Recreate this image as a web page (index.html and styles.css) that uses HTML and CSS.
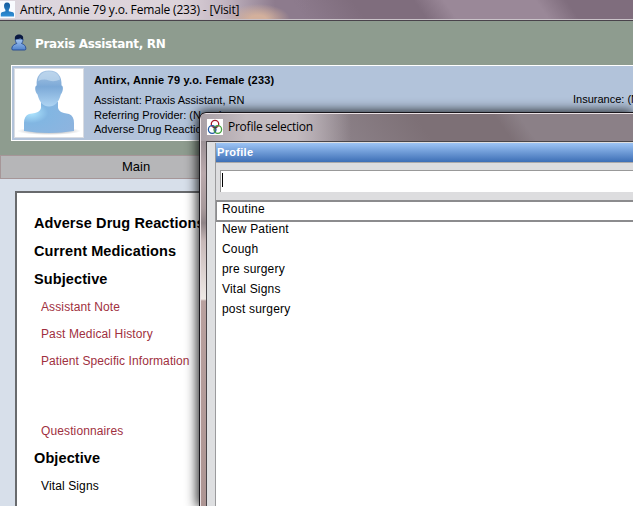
FILE: index.html
```html
<!DOCTYPE html>
<html lang="en">
<head>
<meta charset="utf-8">
<title>Antirx, Annie - Visit</title>
<link rel="stylesheet" href="styles.css">
</head>
<body>
<div class="app">
  <header class="titlebar">
    <svg class="app-icon" viewBox="0 0 15 17"><defs><linearGradient id="b" x2="0" y2="1"><stop stop-color="#135a9d"/><stop offset="1" stop-color="#2f8fd6"/></linearGradient></defs><rect width="15" height="17" fill="#f8fbff"/><path d="M7 1.500c2.500 0 3.400 1.800 3 4.200-.2 1.600-.8 2.300-1.200 3v1.600l4.200 1q1 .4 1 1.700v2.500H.8V13q0-1.300 1-1.700l3.600-1V8.700c-.5-.7-1.200-1.400-1.300-3C3.800 3.300 4.600 1.500 7 1.500z" fill="url(#b)"/></svg>
    <span class="title-text">Antirx, Annie 79 y.o. Female (233) - [Visit]</span>
  </header>
  <section class="banner">
    <div class="user">
      <svg class="user-icon" viewBox="0 0 16 17"><defs><linearGradient id="u" x2="0" y2="1"><stop stop-color="#a8c8f2"/><stop offset="1" stop-color="#4f82cc"/></linearGradient></defs><path d="M4.300 5c0 2 .5 3.600 1.500 4.500C3.200 10.200.8 11.800.8 14.800c0 .8.400 1.200 1.200 1.200h11.700c.8 0 1.200-.4 1.200-1.200 0-3-2-4.600-4.400-5.300 1-1 1.500-2.500 1.500-4.500z" fill="url(#u)" stroke="#244a92" stroke-width=".9"/><path d="M4 5.500C3.300 2 5.500.6 8 .6s5 1.400 4 5c-1.500-.2-2.200-.7-2.700-1.500C8 5.200 6 5.500 4 5.500z" fill="#0a1941"/></svg>
      <span class="user-name">Praxis Assistant, RN</span>
    </div>
    <div class="patient">
      <svg class="photo" viewBox="0 0 70 70"><defs><linearGradient id="h" x2="0" y2="1"><stop stop-color="#a9c6e4"/><stop offset=".45" stop-color="#7ca9d7"/><stop offset="1" stop-color="#aed4f3"/></linearGradient><radialGradient id="s" cx=".15" cy=".35" r=".95"><stop stop-color="#aee6ff"/><stop offset=".35" stop-color="#82b6e2"/><stop offset="1" stop-color="#8db4df"/></radialGradient><radialGradient id="g"><stop stop-color="#909499"/><stop offset="1" stop-color="#fff"/></radialGradient></defs><rect x=".5" y=".5" width="69" height="69" fill="#fff" stroke="#d9dce2"/><ellipse cx="35" cy="63" rx="32" ry="4" fill="url(#g)"/><path d="M27 34h17v6q1 4 6 5l5 1q5 2 5 9v8q-25 4-50 0v-8q0-7 5-9l6-1q5-1 6-5z" fill="url(#s)"/><path d="M35 2.500c9 0 13 6 12.500 15 2 0 2 6-.7 9-2 8-6 12-11.800 12s-9.500-4-11.500-12c-3-3-2.800-9-.8-9C22 8.500 26 2.500 35 2.500z" fill="url(#h)"/><path d="M24 13C25 6 29 3.500 35 3.500s10 2.500 11 8q-6 3-11 1t-11 .5z" fill="#c9dff2" opacity=".6"/></svg>
      <div class="details">
        <div class="patient-name">Antirx, Annie 79 y.o. Female (233)</div>
        <div>Assistant: Praxis Assistant, RN</div>
        <div>Referring Provider: (None)</div>
        <div class="reactions">Adverse Drug Reactions:</div>
      </div>
      <div class="insurance">Insurance: (N</div>
    </div>
  </section>
  <nav class="tabs"><span class="tab">Main</span></nav>
  <main class="workspace">
    <div class="chart">
      <h2>Adverse Drug Reactions</h2>
      <h2>Current Medications</h2>
      <h2>Subjective</h2>
      <a>Assistant Note</a>
      <a>Past Medical History</a>
      <a class="info">Patient Specific Information</a>
      <a>Questionnaires</a>
      <h2>Objective</h2>
      <a class="plain">Vital Signs</a>
    </div>
  </main>
</div>
<div class="dialog">
  <div class="dialog-title">
    <svg class="rings" viewBox="0 0 16 16"><rect width="16" height="16" fill="#fff"/><g fill="none" stroke-width="1.300"><circle cx="8" cy="5" r="3.700" stroke="#a51c2b"/><circle cx="5.200" cy="10.500" r="3.800" stroke="#235aa5"/><circle cx="10.800" cy="10.500" r="3.800" stroke="#45a33d"/></g><path d="M6 7.500l2 1.500 2-1.500M8 9v3" fill="none" stroke="#333" stroke-width=".8"/></svg>
    <span class="dialog-name">Profile selection</span>
  </div>
  <div class="client">
    <div class="column">
      <div class="column-head">Profile</div>
      <div class="search"><div class="field"><i class="caret"></i></div></div>
      <div class="list">
        <div class="item selected">Routine</div>
        <div class="item">New Patient</div>
        <div class="item">Cough</div>
        <div class="item">pre surgery</div>
        <div class="item">Vital Signs</div>
        <div class="item">post surgery</div>
      </div>
    </div>
  </div>
</div>
</body>
</html>
```
FILE: styles.css
```css
* { box-sizing: border-box; }
html { overflow: hidden; }
body {
  margin: 0;
  width: 633px;
  height: 506px;
  overflow: hidden;
  position: relative;
  font-family: "Liberation Sans", Arial, sans-serif;
  color: #000;
}
.app { display: flex; flex-direction: column; height: 506px; overflow: hidden; }
.titlebar {
  display: flex;
  height: 21px;
  flex: none;
  border-bottom: 1px solid #49434b;
  box-shadow: inset 0 -1px #c9c2c8;
  background:
    radial-gradient(ellipse 32px 15px at 258px 19px, #d3b09c 0 25%, transparent 100%),
    linear-gradient(90deg, #dcd6de 0, #ddd3da 180px, #c2b5c1 225px, #8d7b8d 275px, transparent 310px),
    linear-gradient(55deg, #8d7b8d 0 250px, #7f6d7d 300px 350px, #9a8898 375px 450px, #7f6d7d 475px);
}
.app-icon { width: 15px; height: 17px; margin-top: 1px; }
.title-text {
  margin-left: 5px;
  font: 12px/19px "Open Sans", "Noto Sans", sans-serif;
  letter-spacing: -.17px;
  white-space: nowrap;
}
.banner { height: 134px; flex: none; padding: 13px 0 0 11px; background: #8e9c8f; }
.user { display: flex; height: 31px; }
.user-icon { width: 16px; height: 17px; }
.user-name {
  margin-left: 8px;
  font: bold 12px/20px "DejaVu Sans", sans-serif;
  letter-spacing: -.33px;
  color: #fff;
}
.patient {
  display: flex;
  height: 76px;
  padding: 2px 0 2px 2px;
  border: 1px solid #fff;
  border-right: 0;
  background: #b2c3da;
  font-size: 11px;
  line-height: 15px;
  white-space: nowrap;
}
.photo { width: 70px; height: 70px; flex: none; }
.details { width: 489px; flex: none; padding: 5px 0 0 10px; }
.patient-name { font-weight: bold; margin-bottom: 5px; letter-spacing: .18px; }
.reactions { margin-top: -1px; }
.insurance { width: 60px; overflow: hidden; padding-top: 24px; }
.tabs {
  height: 24px;
  flex: none;
  padding-left: 121px;
  border: 1px solid #a69698;
  background: #b6b6b8;
  font-size: 13px;
  line-height: 22px;
}
.workspace { flex: 1; min-height: 0; padding: 12px 0 0 15px; background: #d7dfea; }
.chart {
  height: 315px;
  padding: 16px 0 0 17px;
  border: 2px solid #686a6d;
  border-bottom: 0;
  background: #fff;
}
h2 { margin: 0; font-size: 14.5px; line-height: 28px; letter-spacing: .1px; }
.chart a {
  display: block;
  position: relative;
  top: 1px;
  margin-left: 7px;
  font-size: 12px;
  line-height: 27px;
  letter-spacing: .12px;
  color: #a03040;
}
.chart .info { margin-bottom: 43px; letter-spacing: .09px; }
.chart .plain { color: #000; }
.dialog {
  position: absolute;
  left: 199px;
  top: 112px;
  width: 434px;
  height: 394px;
  padding-left: 5px;
  overflow: hidden;
  border: 1px solid #17151a;
  border-width: 1px 0 0 1px;
  border-radius: 7px 0 0;
  box-shadow: inset 1px 1px #e9e0e3, -1px 0 12px 1px rgba(0,0,0,.85);
  background: linear-gradient(#9a9095 0 28px, #b9a9ac 60px, #a89a9c 95px, #8f8487 110px, #c7b8b8 128px, #eee8e5 186px, #b9a19f 188px, #ad9593 100%);
}
.dialog-title {
  display: flex;
  height: 27px;
  margin: 1px 0 0 -4px;
  padding: 5px 0 0 6px;
  background:
    linear-gradient(90deg, #aaa1a7, #c3bbc0 45px 95px, #b5acb2 112px, transparent 150px),
    linear-gradient(55deg, #91868d 0 90px, #8b8087 120px, #7d7076 190px 255px, #8b8087 275px 365px, #7d7076 385px);
}
.rings { width: 16px; height: 16px; }
.dialog-name {
  margin-left: 5px;
  font: 12px/16px "Open Sans", "Noto Sans", sans-serif;
  letter-spacing: -.25px;
}
.client {
  height: 366px;
  padding: 1px 0 0 8px;
  border: solid #4a464a;
  border-width: 1px 0 0 1px;
  background: #dedfe1;
  margin-left: 1px;
}
.column { border-left: 1px solid #9b9b9d; }
.column-head {
  height: 20px;
  padding-left: 1px;
  border-bottom: 1px solid #aaa9aa;
  background: linear-gradient(#9dc4f5, #3d6fb6);
  color: #fff;
  font-size: 11px;
  font-weight: bold;
  line-height: 19px;
  letter-spacing: .3px;
}
.search { height: 37px; padding: 7px 0 0 4px; background: #dddddf; }
.field {
  height: 22px;
  padding: 2px 0 0 1px;
  border: solid #999;
  border-width: 1px 0 0 1px;
  background: #fff;
}
.caret { display: block; width: 1px; height: 14px; background: #000; }
.list { height: 307px; background: #fff; }
.item { height: 20px; padding-left: 6px; font-size: 12px; line-height: 17px; letter-spacing: .2px; }
.selected {
  height: 22px;
  padding-left: 5px;
  border: solid #8c8c8e;
  border-width: 2px 0 2px 1px;
  line-height: 14px;
}
.selected + .item { margin-top: -1px; }
```
